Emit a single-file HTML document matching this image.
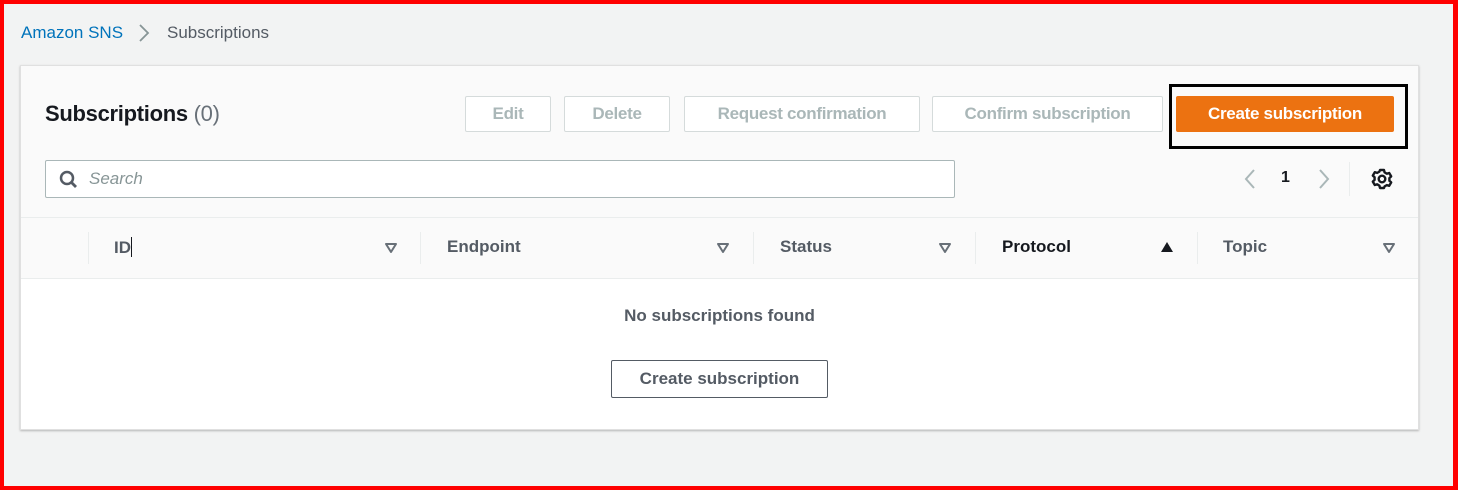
<!DOCTYPE html>
<html><head><style>
*{box-sizing:border-box;margin:0;padding:0}
body{width:1458px;height:490px;background:#f2f3f3;font-family:"Liberation Sans",sans-serif;position:relative;overflow:hidden}
.frame{position:absolute;left:0;top:0;width:1458px;height:490px;border:4px solid #f00;border-right-width:5px;z-index:10;pointer-events:none}
.a{position:absolute}
.crumb{top:23px;font-size:17px;color:#545b64}
.panel{left:20px;top:65px;width:1399px;height:365px;background:#fafafa;border:1px solid #e0e0e0;box-shadow:0 1px 2px rgba(0,0,0,.25)}
.btn{position:absolute;top:96px;height:36px;border:1px solid #d5dbdb;background:#fff;color:#aab7b8;font-weight:bold;font-size:17px;display:flex;align-items:center;justify-content:center;border-radius:2px;letter-spacing:-0.3px}
.h{font-weight:bold;font-size:17px;color:#16191f}
.th{position:absolute;top:237px;font-weight:bold;font-size:17px;color:#545b64}
.sep{position:absolute;top:232px;width:1px;height:32px;background:#eaeded}
</style></head><body>
<div class="frame"></div>
<div class="a crumb" style="left:21px;color:#0073bb">Amazon SNS</div>
<svg class="a" style="left:137px;top:24px" width="14" height="18"><path d="M3 1 L11 9 L3 17" fill="none" stroke="#879596" stroke-width="1.8"/></svg>
<div class="a crumb" style="left:167px">Subscriptions</div>
<div class="a panel"></div>
<div class="a" style="left:21px;top:279px;width:1397px;height:150px;background:#fff"></div>
<div class="a" style="left:21px;top:217px;width:1397px;height:1px;background:#eaeded"></div>
<div class="a" style="left:21px;top:278px;width:1397px;height:1px;background:#eaeded"></div>
<div class="a" style="left:45px;top:101px;font-size:22px;letter-spacing:-0.3px"><b style="color:#16191f">Subscriptions</b> <span style="color:#687078">(0)</span></div>
<div class="btn" style="left:465px;width:86px">Edit</div>
<div class="btn" style="left:564px;width:106px">Delete</div>
<div class="btn" style="left:684px;width:236px">Request confirmation</div>
<div class="btn" style="left:932px;width:231px">Confirm subscription</div>
<div class="a" style="left:1169px;top:84px;width:239px;height:65px;border:3px solid #000"></div>
<div class="btn" style="left:1176px;width:218px;background:#ec7211;border-color:#ec7211;color:#fff">Create subscription</div>
<div class="a" style="left:45px;top:160px;width:910px;height:38px;background:#fff;border:1px solid #aab7b8;border-radius:2px"></div>
<svg class="a" style="left:59px;top:170px" width="20" height="20" viewBox="0 0 20 20"><circle cx="8" cy="8" r="6" fill="none" stroke="#545b64" stroke-width="2.5"/><line x1="12.5" y1="12.5" x2="17" y2="17" stroke="#545b64" stroke-width="2.8"/></svg>
<div class="a" style="left:89px;top:169px;font-size:17px;font-style:italic;color:#879596">Search</div>
<svg class="a" style="left:1243px;top:168px" width="14" height="22"><path d="M11 2 L3 11 L11 20" fill="none" stroke="#aab7b8" stroke-width="2"/></svg>
<div class="a h" style="left:1281px;top:169px;font-size:16px">1</div>
<svg class="a" style="left:1317px;top:168px" width="14" height="22"><path d="M3 2 L11 11 L3 20" fill="none" stroke="#aab7b8" stroke-width="2"/></svg>
<div class="a" style="left:1349px;top:162px;width:1px;height:34px;background:#eaeded"></div>
<svg class="a" style="left:1371px;top:168px" width="22" height="22" viewBox="0 0 22 22"><circle cx="11" cy="11" r="3.3" fill="none" stroke="#16191f" stroke-width="2.4"/><path d="M9 2h4l.6 2.4 2.2 1.3 2.4-.7 2 3.4-1.8 1.7v2.6l1.8 1.7-2 3.4-2.4-.7-2.2 1.3L13 20H9l-.6-2.4-2.2-1.3-2.4.7-2-3.4 1.8-1.7V9.3L1.8 7.6l2-3.4 2.4.7 2.2-1.3z" fill="none" stroke="#16191f" stroke-width="2.4" stroke-linejoin="round"/></svg>
<div class="sep" style="left:88px"></div>
<div class="sep" style="left:420px"></div>
<div class="sep" style="left:753px"></div>
<div class="sep" style="left:975px"></div>
<div class="sep" style="left:1197px"></div>
<div class="th" style="left:114px">ID<span style="display:inline-block;width:1px;height:20px;background:#16191f;vertical-align:-4px"></span></div>
<div class="th" style="left:447px">Endpoint</div>
<div class="th" style="left:780px">Status</div>
<div class="th" style="left:1002px;color:#16191f">Protocol</div>
<div class="th" style="left:1223px">Topic</div>
<svg class="a" style="left:384px;top:242px" width="14" height="12"><path d="M2 2h10L7 10z" fill="none" stroke="#687078" stroke-width="2" stroke-linejoin="round"/></svg>
<svg class="a" style="left:716px;top:242px" width="14" height="12"><path d="M2 2h10L7 10z" fill="none" stroke="#687078" stroke-width="2" stroke-linejoin="round"/></svg>
<svg class="a" style="left:938px;top:242px" width="14" height="12"><path d="M2 2h10L7 10z" fill="none" stroke="#687078" stroke-width="2" stroke-linejoin="round"/></svg>
<svg class="a" style="left:1160px;top:241px" width="14" height="12"><path d="M1 11h12L7 1z" fill="#16191f"/></svg>
<svg class="a" style="left:1382px;top:242px" width="14" height="12"><path d="M2 2h10L7 10z" fill="none" stroke="#687078" stroke-width="2" stroke-linejoin="round"/></svg>
<div class="a" style="left:0;width:1439px;top:306px;text-align:center;font-weight:bold;font-size:17px;color:#545b64">No subscriptions found</div>
<div class="a" style="left:611px;top:360px;width:217px;height:38px;border:1px solid #545b64;background:#fff;display:flex;align-items:center;justify-content:center;font-weight:bold;font-size:17px;color:#545b64;border-radius:2px">Create subscription</div>
</body></html>
